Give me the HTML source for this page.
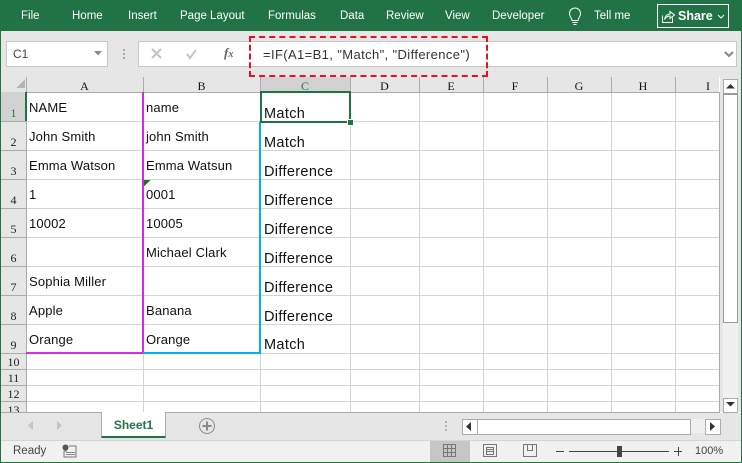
<!DOCTYPE html>
<html><head><meta charset="utf-8"><style>
html,body{margin:0;padding:0}
body{width:742px;height:463px;overflow:hidden;position:relative;background:#fff;font-family:"Liberation Sans",sans-serif}
.a{position:absolute;white-space:nowrap}
.t{top:9px;font-size:11.5px;line-height:14px;color:#fff}
.c{font-size:13px;line-height:15px;color:#111;letter-spacing:.15px}
.m{font-size:14.5px;line-height:16px;color:#111;left:264px;letter-spacing:.34px;margin-top:1px}
.h{top:78px;height:15px;line-height:17px;font-family:"Liberation Serif",serif;font-size:12px;color:#111;text-align:center}
.r{left:1px;width:25px;text-align:center;font-family:"Liberation Serif",serif;font-size:12px;line-height:14px;color:#222}
</style></head><body>
<div class="a" style="left:0;top:0;width:742px;height:31px;background:#217346"></div>
<div class="a" style="left:0;top:31px;width:742px;height:46px;background:#e6e6e6"></div>
<div class="a t" style="left:21px">File</div>
<div class="a t" style="left:72px">Home</div>
<div class="a t" style="left:128px">Insert</div>
<div class="a t" style="left:180px">Page Layout</div>
<div class="a t" style="left:268px">Formulas</div>
<div class="a t" style="left:340px">Data</div>
<div class="a t" style="left:386px">Review</div>
<div class="a t" style="left:445px">View</div>
<div class="a t" style="left:492px">Developer</div>
<div class="a t" style="left:594px">Tell me</div>
<svg class="a" style="left:566px;top:7px" width="18" height="20" fill="none" stroke="#fff" stroke-width="1"><path d="M6 13.500C6 11 3.500 10 3.500 6.500a5.500 5.500 0 0 1 11 0C14.500 10 12 11 12 13.500ZM6.500 15.500h5M7.500 17.500h3"/></svg>
<div class="a" style="left:657px;top:4px;width:70px;height:22px;border:1px solid #fff"></div>
<svg class="a" style="left:661px;top:9px" width="16" height="15" fill="none" stroke="#fff" stroke-width="1"><path d="M1.500 6.500v7h10v-5M3.500 10.500C4 7 6.500 5 9 5V2.500l4.500 3.500L9 9.500V7C7 7 5 8 3.500 10.500Z"/></svg>
<div class="a" style="left:678px;top:8px;font-size:12.500px;font-weight:bold;line-height:16px;color:#fff">Share</div>
<svg class="a" style="left:717px;top:14px" width="8" height="5" fill="none" stroke="#fff"><path d="M1 1l3 3 3-3"/></svg>

<div class="a" style="left:6px;top:41px;width:100px;height:24px;background:#fff;border:1px solid #c6c6c6"></div>
<div class="a" style="left:13px;top:47px;font-size:12px;line-height:14px;color:#444">C1</div>
<svg class="a" style="left:94px;top:51px" width="8" height="5"><path d="M0 0h8L4 4.500Z" fill="#888"/></svg>
<div class="a" style="left:123px;top:49px;width:2px;height:2px;background:#aaa;box-shadow:0 4px #aaa,0 8px #aaa"></div>
<div class="a" style="left:138px;top:41px;width:597px;height:24px;background:#fff;border:1px solid #c6c6c6"></div>
<svg class="a" style="left:150px;top:47px" width="46" height="14" fill="none" stroke="#c4c4c4" stroke-width="2"><path d="M2 2l9 9M11 2l-9 9M37 7l3 4 6-8"/></svg>
<div class="a" style="left:224px;top:46px;font-family:'Liberation Serif',serif;font-style:italic;font-weight:bold;font-size:13px;line-height:14px;color:#666">f<span style="font-size:10px">x</span></div>
<div class="a" style="left:263px;top:47px;font-size:13px;letter-spacing:.38px;line-height:15px;color:#333">=IF(A1=B1, "Match", "Difference")</div>
<svg class="a" style="left:724px;top:51px" width="10" height="7" fill="none" stroke="#888" stroke-width="2"><path d="M1 1l4 4 4-4"/></svg>
<div class="a" style="left:249px;top:36px;width:235px;height:37px;border:2px dashed #e81123"></div>

<div class="a" style="left:1px;top:77px;width:718px;height:15px;background:#e6e6e6"></div>
<div class="a" style="left:1px;top:92px;width:25px;height:320px;background:#e6e6e6"></div>
<div class="a" style="left:1px;top:92px;width:25px;height:29px;background:#d2d2d2"></div>
<div class="a" style="left:260px;top:77px;width:90px;height:15px;background:#d2d2d2"></div>
<div class="a" style="left:720px;top:77px;width:21px;height:335px;background:#e6e6e6"></div>
<div class="a" style="left:723px;top:95px;width:15px;height:317px;background:#f0f0f0"></div>

<svg class="a" style="left:0;top:77px" width="720" height="336" fill="none" shape-rendering="crispEdges">
<path d="M16 11h9V2Z" fill="#b4b4b4"/>
<g stroke="#d4d4d4"><path d="M143.500 15V335M260.500 15V335M350.500 15V335M419.500 15V335M483.500 15V335M547.500 15V335M611.500 15V335M675.500 15V335"/>
<path d="M26 44.500H719M26 73.500H719M26 102.500H719M26 131.500H719M26 160.500H719M26 189.500H719M26 218.500H719M26 247.500H719M26 276.500H719M26 292.500H719M26 308.500H719M26 324.500H719"/></g>
<g stroke="#ababab"><path d="M26.500 0V15M143.500 0V15M260.500 0V15M350.500 0V15M419.500 0V15M483.500 0V15M547.500 0V15M611.500 0V15M675.500 0V15"/>
<path d="M0 44.500H26M0 73.500H26M0 102.500H26M0 131.500H26M0 160.500H26M0 189.500H26M0 218.500H26M0 247.500H26M0 276.500H26M0 292.500H26M0 308.500H26M0 324.500H26"/>
<path d="M26 15.500H719M26.500 15V335M719.500 15V335M0 335.500H720"/></g>
</svg>

<div class="a h" style="left:26px;width:117px">A</div><div class="a h" style="left:143px;width:117px">B</div><div class="a h" style="left:260px;width:90px;color:#217346">C</div><div class="a h" style="left:350px;width:69px">D</div><div class="a h" style="left:419px;width:64px">E</div><div class="a h" style="left:483px;width:64px">F</div><div class="a h" style="left:547px;width:64px">G</div><div class="a h" style="left:611px;width:64px">H</div><div class="a h" style="left:686px;width:44px">I</div>

<div class="a r" style="top:106px;color:#217346">1</div><div class="a r" style="top:135px">2</div><div class="a r" style="top:164px">3</div><div class="a r" style="top:193px">4</div><div class="a r" style="top:222px">5</div><div class="a r" style="top:251px">6</div><div class="a r" style="top:280px">7</div><div class="a r" style="top:309px">8</div><div class="a r" style="top:338px">9</div><div class="a r" style="top:355px">10</div><div class="a r" style="top:371px">11</div><div class="a r" style="top:387px">12</div>
<div class="a" style="left:1px;top:403px;width:25px;height:9px;overflow:hidden;text-align:center;font-family:'Liberation Serif',serif;font-size:12px;line-height:14px;color:#222">13</div>

<div class="a c" style="left:29px;top:100px">NAME</div><div class="a c" style="left:146px;top:100px">name</div>
<div class="a c" style="left:29px;top:129px">John Smith</div><div class="a c" style="left:146px;top:129px">john Smith</div>
<div class="a c" style="left:29px;top:158px">Emma Watson</div><div class="a c" style="left:146px;top:158px">Emma Watsun</div>
<div class="a c" style="left:29px;top:187px">1</div><div class="a c" style="left:146px;top:187px">0001</div>
<div class="a c" style="left:29px;top:216px">10002</div><div class="a c" style="left:146px;top:216px">10005</div>
<div class="a c" style="left:146px;top:245px">Michael Clark</div>
<div class="a c" style="left:29px;top:274px">Sophia Miller</div>
<div class="a c" style="left:29px;top:303px">Apple</div><div class="a c" style="left:146px;top:303px">Banana</div>
<div class="a c" style="left:29px;top:332px">Orange</div><div class="a c" style="left:146px;top:332px">Orange</div>
<div class="a m" style="top:105px">Match</div><div class="a m" style="top:134px">Match</div><div class="a m" style="top:163px">Difference</div><div class="a m" style="top:192px">Difference</div><div class="a m" style="top:221px">Difference</div><div class="a m" style="top:250px">Difference</div><div class="a m" style="top:279px">Difference</div><div class="a m" style="top:308px">Difference</div><div class="a m" style="top:336px">Match</div>

<svg class="a" style="left:144px;top:180px" width="7" height="7"><path d="M0 0h6.500L0 6.500Z" fill="#107c10"/></svg>
<div class="a" style="left:25px;top:92px;width:2px;height:29px;background:#217346"></div>
<div class="a" style="left:26px;top:352px;width:117px;height:2px;background:#d92be8"></div>
<div class="a" style="left:142px;top:92px;width:2px;height:262px;background:#d02be0"></div>
<div class="a" style="left:143px;top:352px;width:117px;height:2px;background:#00b0f0"></div>
<div class="a" style="left:259px;top:122px;width:2px;height:232px;background:#00b0f0"></div>
<div class="a" style="left:260px;top:91px;width:87px;height:28px;border:2px solid #217346"></div>
<div class="a" style="left:347px;top:119px;width:5px;height:5px;background:#217346;border:1px solid #fff"></div>

<div class="a" style="left:723px;top:79px;width:13px;height:13px;background:#fff;border:1px solid #ababab"></div>
<svg class="a" style="left:726px;top:84px" width="9" height="5"><path d="M4.500 0L9 4.500H0Z" fill="#333"/></svg>
<div class="a" style="left:723px;top:93px;width:13px;height:227px;background:#fff;border:1px solid #9a9a9a;border-top:2px solid #9a9a9a"></div>
<div class="a" style="left:723px;top:398px;width:13px;height:13px;background:#fff;border:1px solid #ababab"></div>
<svg class="a" style="left:726px;top:402px" width="9" height="5"><path d="M0 0h9L4.500 4.500Z" fill="#333"/></svg>

<div class="a" style="left:1px;top:413px;width:740px;height:27px;background:#e6e6e6"></div>
<div class="a" style="left:1px;top:440px;width:740px;height:1px;background:#d4d4d4"></div>
<svg class="a" style="left:27px;top:421px" width="36" height="10"><path d="M6 0v9L1 4.500Z" fill="#c4c4c4"/><path d="M30 0v9l5-4.500Z" fill="#c4c4c4"/></svg>
<div class="a" style="left:101px;top:412px;width:63px;height:24px;background:#fff;border:1px solid #ababab;border-top:0;border-bottom:2px solid #217346"></div>
<div class="a" style="left:102px;top:418px;width:63px;text-align:center;font-size:12px;font-weight:bold;line-height:15px;color:#217346">Sheet1</div>
<svg class="a" style="left:198px;top:417px" width="18" height="18" fill="none" stroke="#8a8a8a"><circle cx="9" cy="9" r="7.500"/><path d="M9 4.500v9M4.500 9h9" stroke-width="2"/></svg>
<div class="a" style="left:445px;top:421px;width:2px;height:2px;background:#b4b4b4;box-shadow:0 4px #b4b4b4,0 8px #b4b4b4"></div>
<div class="a" style="left:462px;top:419px;width:14px;height:14px;background:#fff;border:1px solid #ababab"></div>
<svg class="a" style="left:466px;top:422px" width="6" height="9"><path d="M5 0v9L0 4.500Z" fill="#333"/></svg>
<div class="a" style="left:477px;top:419px;width:212px;height:14px;background:#fff;border:1px solid #ababab"></div>
<div class="a" style="left:691px;top:419px;width:14px;height:14px;background:#f0f0f0"></div>
<div class="a" style="left:705px;top:419px;width:14px;height:14px;background:#fff;border:1px solid #ababab"></div>
<svg class="a" style="left:710px;top:422px" width="6" height="9"><path d="M0 0v9l5-4.500Z" fill="#333"/></svg>

<div class="a" style="left:1px;top:441px;width:740px;height:21px;background:#f1f1f1"></div>
<div class="a" style="left:13px;top:444px;font-size:11.500px;line-height:14px;color:#444">Ready</div>
<svg class="a" style="left:62px;top:444px" width="15" height="14" shape-rendering="crispEdges"><circle cx="3.500" cy="3.500" r="3" fill="#555"/><path d="M7 2h7v11H2V7h3" fill="none" stroke="#777"/><path d="M4 8h9v1H4zM4 10h9v1H4z" fill="#888"/></svg>
<div class="a" style="left:430px;top:441px;width:40px;height:21px;background:#c6c6c6"></div>
<svg class="a" style="left:443px;top:443px" width="96" height="16" fill="none" stroke="#777" shape-rendering="crispEdges"><path d="M.5 1.500h12v12H.5ZM4.500 1.500v12M8.500 1.500v12M.5 5.500h12M.5 9.500h12"/><path d="M40.500 1.500h13v12h-13ZM43.500 4.500h7v7h-7ZM43.500 6.500h7M43.500 8.500h7"/><path d="M80.500 1.500h13v12h-13ZM84.500 1.500v6h5v-6"/></svg>
<div class="a" style="left:556px;top:451px;width:8px;height:1px;background:#444"></div>
<div class="a" style="left:569px;top:451px;width:100px;height:1px;background:#444"></div>
<div class="a" style="left:617px;top:446px;width:5px;height:11px;background:#444"></div>
<div class="a" style="left:674px;top:451px;width:8px;height:1px;background:#444"></div>
<div class="a" style="left:678px;top:447px;width:1px;height:9px;background:#444"></div>
<div class="a" style="left:695px;top:444px;font-size:11px;line-height:14px;color:#444">100%</div>

<div class="a" style="left:0;top:31px;width:1px;height:432px;background:#217346"></div>
<div class="a" style="left:741px;top:31px;width:1px;height:432px;background:#217346"></div>
<div class="a" style="left:0;top:462px;width:742px;height:1px;background:#217346"></div>
</body></html>
